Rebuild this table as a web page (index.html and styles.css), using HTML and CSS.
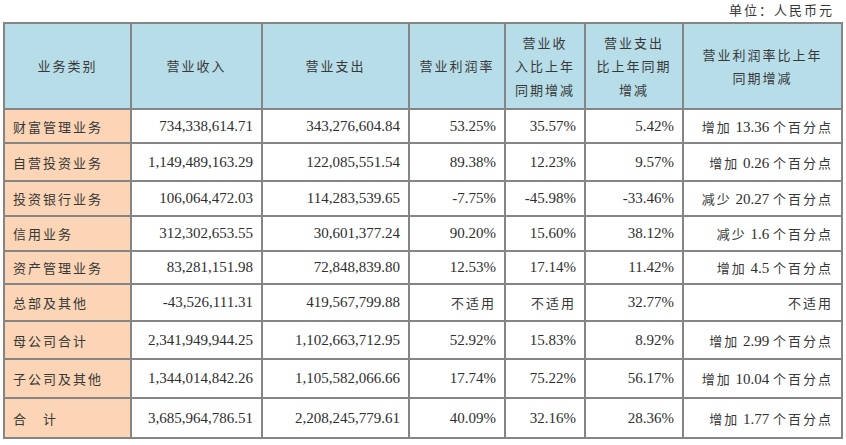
FILE: index.html
```html
<!DOCTYPE html>
<html lang="zh-CN">
<head>
<meta charset="utf-8">
<title>业务类别</title>
<link rel="stylesheet" href="styles.css">
</head>
<body>
<div class="page">
  <div class="unit cn">单位：人民币元</div>
  <table class="report">
    <colgroup>
      <col class="c1"><col class="c2"><col class="c3"><col class="c4"><col class="c5"><col class="c6"><col class="c7">
    </colgroup>
    <thead>
      <tr>
        <th class="cn">业务类别</th>
        <th class="cn">营业收入</th>
        <th class="cn">营业支出</th>
        <th class="cn">营业利润率</th>
        <th class="cn">营业收<br>入比上年<br>同期增减</th>
        <th class="cn">营业支出<br>比上年同期<br>增减</th>
        <th class="cn">营业利润率比上年<br>同期增减</th>
      </tr>
    </thead>
    <tbody>
      <tr class="r1">
        <td class="name cn">财富管理业务</td>
        <td>734,338,614.71</td><td>343,276,604.84</td><td>53.25%</td><td>35.57%</td><td>5.42%</td>
        <td><span class="cn">增加</span> 13.36 <span class="cn">个百分点</span></td>
      </tr>
      <tr class="r2">
        <td class="name cn">自营投资业务</td>
        <td>1,149,489,163.29</td><td>122,085,551.54</td><td>89.38%</td><td>12.23%</td><td>9.57%</td>
        <td><span class="cn">增加</span> 0.26 <span class="cn">个百分点</span></td>
      </tr>
      <tr class="r3">
        <td class="name cn">投资银行业务</td>
        <td>106,064,472.03</td><td>114,283,539.65</td><td>-7.75%</td><td>-45.98%</td><td>-33.46%</td>
        <td><span class="cn">减少</span> 20.27 <span class="cn">个百分点</span></td>
      </tr>
      <tr class="r4">
        <td class="name cn">信用业务</td>
        <td>312,302,653.55</td><td>30,601,377.24</td><td>90.20%</td><td>15.60%</td><td>38.12%</td>
        <td><span class="cn">减少</span> 1.6 <span class="cn">个百分点</span></td>
      </tr>
      <tr class="r5">
        <td class="name cn">资产管理业务</td>
        <td>83,281,151.98</td><td>72,848,839.80</td><td>12.53%</td><td>17.14%</td><td>11.42%</td>
        <td><span class="cn">增加</span> 4.5 <span class="cn">个百分点</span></td>
      </tr>
      <tr class="r6">
        <td class="name cn">总部及其他</td>
        <td>-43,526,111.31</td><td>419,567,799.88</td><td class="cn">不适用</td><td class="cn">不适用</td><td>32.77%</td>
        <td class="cn">不适用</td>
      </tr>
      <tr class="r7">
        <td class="name cn">母公司合计</td>
        <td>2,341,949,944.25</td><td>1,102,663,712.95</td><td>52.92%</td><td>15.83%</td><td>8.92%</td>
        <td><span class="cn">增加</span> 2.99 <span class="cn">个百分点</span></td>
      </tr>
      <tr class="r8">
        <td class="name cn">子公司及其他</td>
        <td>1,344,014,842.26</td><td>1,105,582,066.66</td><td>17.74%</td><td>75.22%</td><td>56.17%</td>
        <td><span class="cn">增加</span> 10.04 <span class="cn">个百分点</span></td>
      </tr>
      <tr class="r9">
        <td class="name cn">合　计</td>
        <td>3,685,964,786.51</td><td>2,208,245,779.61</td><td>40.09%</td><td>32.16%</td><td>28.36%</td>
        <td><span class="cn">增加</span> 1.77 <span class="cn">个百分点</span></td>
      </tr>
    </tbody>
  </table>
</div>
</body>
</html>
```

FILE: styles.css
```css
html, body {
  margin: 0;
  padding: 0;
  background: #ffffff;
}

body {
  font-family: "Liberation Serif", "Noto Sans CJK SC", serif;
  font-size: 15px;
  color: #2e2e2e;
}

.page {
  padding: 0 0 0 3px;
  width: 838px;
}

.cn {
  font-family: "Noto Sans CJK SC", "Liberation Sans", sans-serif;
  font-size: 13px;
  letter-spacing: 2px;
  color: #383838;
}

.unit {
  height: 22px;
  line-height: 20px;
  text-align: right;
  padding-right: 7px;
}

.report {
  width: 838px;
  table-layout: fixed;
  border-collapse: collapse;
  border: 2px solid #6f6f6f;
}

.c1 { width: 127px; }
.c2 { width: 131px; }
.c3 { width: 147px; }
.c4 { width: 96px; }
.c5 { width: 80px; }
.c6 { width: 98px; }
.c7 { width: 159px; }

.report th,
.report td {
  border: 2px solid #858585;
  padding: 0 8px 0 8px;
  white-space: nowrap;
  vertical-align: middle;
}

.report th {
  background: #b7dde8;
  font-weight: normal;
  text-align: center;
  line-height: 23.5px;
  height: 84px;
  padding: 0 2px;
}

.report td {
  background: #ffffff;
  text-align: right;
  height: 33px;
}

.report td.name {
  background: #fbd5b5;
  text-align: left;
  padding-left: 8px;
}

.r1 td { height: 32px; }
.r2 td { height: 36px; }
.r3 td { height: 33px; }
.r4 td { height: 33px; }
.r5 td { height: 31px; }
.r6 td { height: 35px; }
.r7 td { height: 36px; }
.r8 td { height: 37px; }
.r9 td { height: 38px; }
```
